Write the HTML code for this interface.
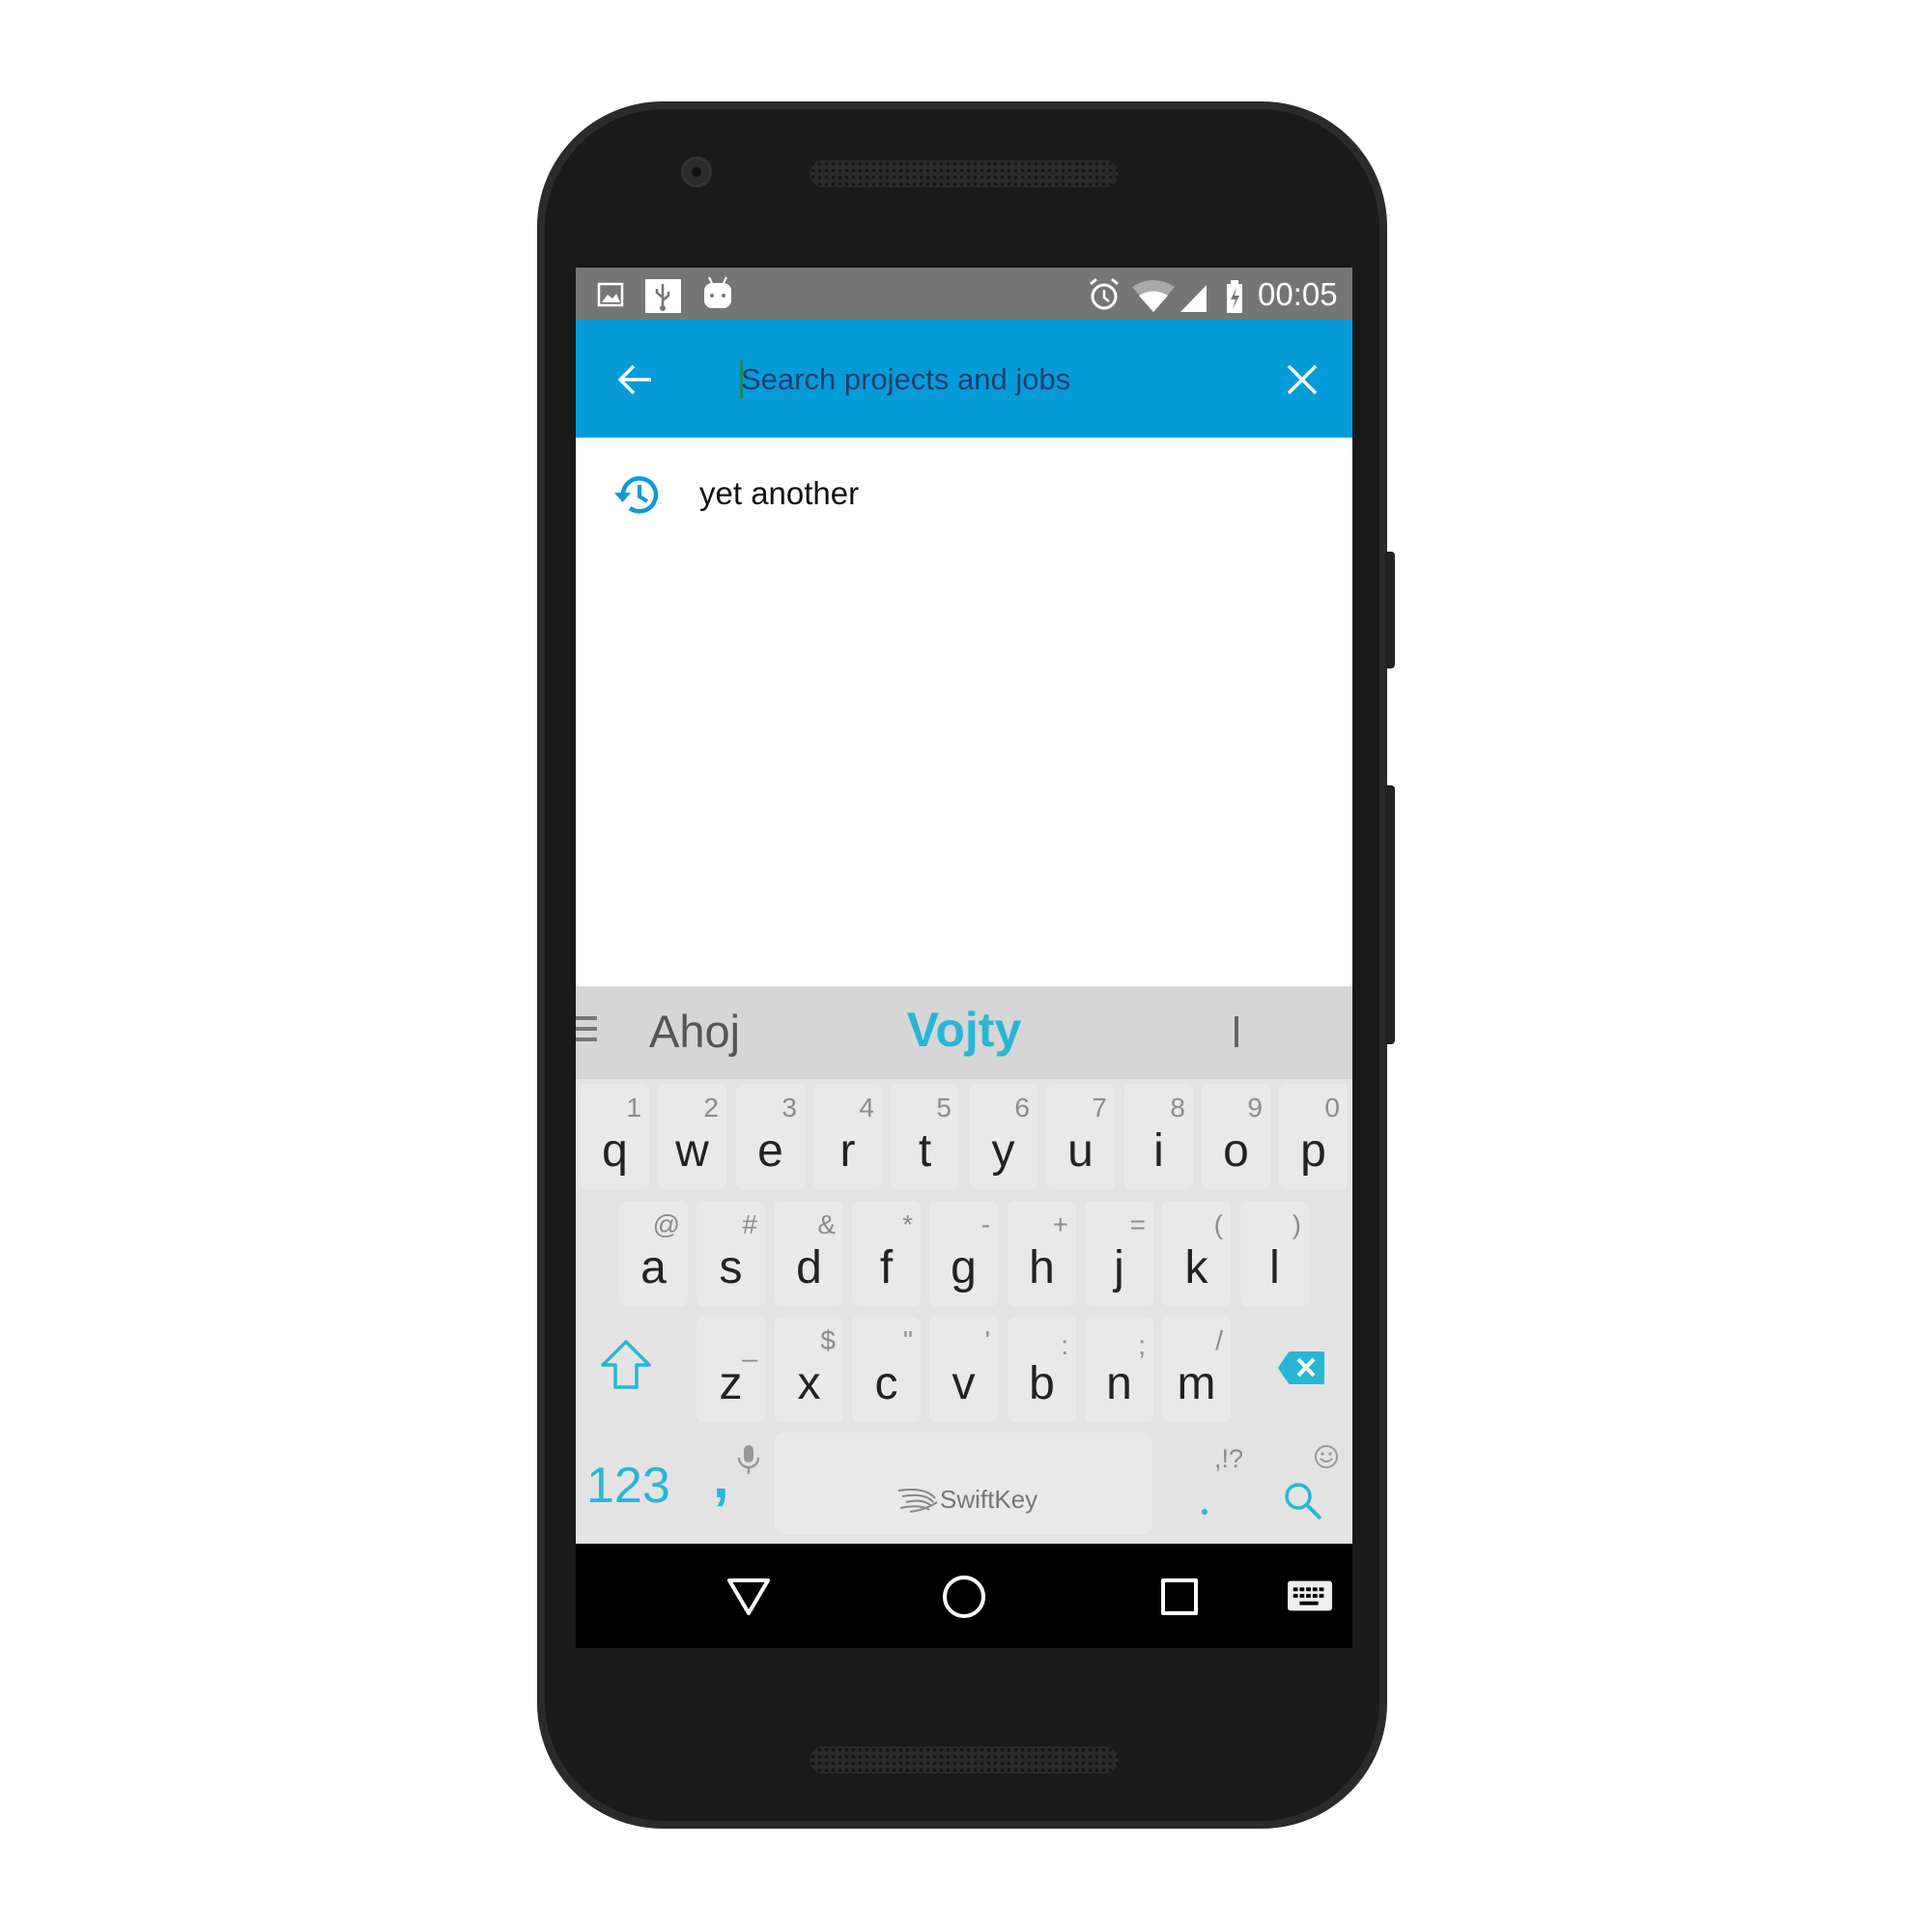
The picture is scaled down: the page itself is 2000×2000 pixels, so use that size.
<!DOCTYPE html><html><head><meta charset="utf-8"><style>
*{margin:0;padding:0;box-sizing:border-box}
body{width:2000px;height:2000px;background:#fff;position:relative;overflow:hidden;font-family:"Liberation Sans",sans-serif}
.a{position:absolute}
.key{position:absolute;width:71px;height:109px;background:#e9e9e9;border-radius:7px}
.key b{position:absolute;left:0;right:0;text-align:center;font-weight:normal;font-size:48px;top:46px;line-height:1;color:#222}
.key i{position:absolute;right:8px;top:11px;font-size:28px;font-style:normal;color:#8c8c8c;line-height:1}
</style></head><body>
<div class="a" style="left:556px;top:105px;width:880px;height:1788px;background:#2b2b2b;border-radius:130px"></div>
<div class="a" style="left:564px;top:113px;width:864px;height:1772px;background:#1a1a1a;border-radius:124px"></div>
<div class="a" style="left:1434px;top:571px;width:10px;height:121px;background:#222;border-radius:0 4px 4px 0"></div>
<div class="a" style="left:1434px;top:813px;width:10px;height:268px;background:#222;border-radius:0 4px 4px 0"></div>
<div class="a" style="left:705px;top:162px;width:32px;height:32px;border-radius:50%;background:#2c2c2c;border:3px solid #333"></div>
<div class="a" style="left:716px;top:173px;width:10px;height:10px;border-radius:50%;background:#111"></div>
<div class="a" style="left:838px;top:166px;width:320px;height:28px;border-radius:14px;background:#2a2a2a;background-image:radial-gradient(#151515 1.5px,transparent 2px);background-size:7px 7px"></div>
<div class="a" style="left:838px;top:1808px;width:320px;height:28px;border-radius:14px;background:#2a2a2a;background-image:radial-gradient(#151515 1.5px,transparent 2px);background-size:7px 7px"></div>
<div class="a" style="left:596px;top:277px;width:804px;height:1429px;background:#fff"></div>
<div class="a" style="left:596px;top:277px;width:804px;height:54px;background:#757575"></div>
<svg class="a" style="left:617px;top:284px" width="110" height="40" viewBox="0 0 110 40">
<rect x="3" y="10" width="24" height="22" fill="none" stroke="#fff" stroke-width="2.5"/><path d="M6 29 L12 21 L17 25 L21 20 L25 29Z" fill="#fff"/>
<rect x="51" y="5" width="37" height="37" fill="#fff"/><path d="M69 10 v26 M69 24 l-6-5 v-4 M69 27 l6-5 v-4" stroke="#757575" stroke-width="2.5" fill="none"/><circle cx="69" cy="35" r="3" fill="#757575"/>
</svg>
<svg class="a" style="left:725px;top:285px" width="36" height="36" viewBox="0 0 36 36"><path d="M9 2 l3 6 M27 2 l-3 6" stroke="#fff" stroke-width="2"/><rect x="4" y="8" width="28" height="26" rx="8" fill="#fff"/><circle cx="12" cy="21" r="2" fill="#757575"/><circle cx="24" cy="21" r="2" fill="#757575"/></svg>
<svg class="a" style="left:1122px;top:286px" width="170" height="40" viewBox="0 0 170 40">
<circle cx="21" cy="21" r="12" fill="none" stroke="#fff" stroke-width="3"/><path d="M21 14 v8 l5 4" stroke="#fff" stroke-width="2.5" fill="none"/><path d="M7 8 l6-5 M35 8 l-6-5" stroke="#fff" stroke-width="3"/>
<path d="M50 11 Q72 -3 94 11 L72 37Z" fill="#aaa"/><path d="M57 20 Q72 11 87 20 L72 37Z" fill="#fff"/>
<path d="M100 37 L127 9 V37Z" fill="#fff"/>
<rect x="148" y="8" width="16" height="30" fill="#fff"/><rect x="152" y="4" width="8" height="5" fill="#fff"/><path d="M158 12 l-6 12 h5 l-3 10 l7-14 h-5z" fill="#757575"/>
</svg>
<div class="a" style="left:1302px;top:288px;font-size:33px;color:#fff;line-height:1">00:05</div>
<div class="a" style="left:596px;top:331px;width:804px;height:122px;background:#059bd9"></div>
<svg class="a" style="left:636px;top:371px" width="44" height="44" viewBox="0 0 44 44"><path d="M38 22 H6 M20 8 L6 22 L20 36" stroke="#fff" stroke-width="3.5" fill="none"/></svg>
<div class="a" style="left:766px;top:373px;width:3px;height:40px;background:#1b8a5a"></div>
<div class="a" style="left:767px;top:374px;font-size:31px;color:#1c3f6e;line-height:1.2">Search projects and jobs</div>
<svg class="a" style="left:1330px;top:375px" width="36" height="36" viewBox="0 0 36 36"><path d="M4 4 L32 32 M32 4 L4 32" stroke="#fff" stroke-width="3.5"/></svg>
<svg class="a" style="left:633px;top:485px" width="54" height="54" viewBox="0 0 54 54"><path d="M12 27 A17 17 0 1 1 19 41" stroke="#0a9bd6" stroke-width="4.5" fill="none"/><path d="M3 25 h17 l-8.5 10z" fill="#0a9bd6"/><path d="M29 17 v12 l8 5" stroke="#0a9bd6" stroke-width="4" fill="none"/></svg>
<div class="a" style="left:724px;top:493px;font-size:33px;color:#111;line-height:1.1">yet another</div>
<div class="a" style="left:596px;top:1021px;width:804px;height:96px;background:#d6d6d6"></div>
<div class="a" style="left:596px;top:1052px;width:22px;height:4px;background:#777;box-shadow:0 11px 0 #777,0 22px 0 #777"></div>
<div class="a" style="left:672px;top:1042px;font-size:47px;color:#555;line-height:1.1">Ahoj</div>
<div class="a" style="left:898px;width:200px;text-align:center;top:1039px;font-size:50px;font-weight:bold;color:#29b6d4;line-height:1.1">Vojty</div>
<div class="a" style="left:1278px;top:1052px;width:4px;height:32px;background:#666"></div>
<div class="a" style="left:596px;top:1117px;width:804px;height:481px;background:#e3e3e3"></div>
<div class="key" style="left:601px;top:1122px"><i>1</i><b>q</b></div>
<div class="key" style="left:681px;top:1122px"><i>2</i><b>w</b></div>
<div class="key" style="left:762px;top:1122px"><i>3</i><b>e</b></div>
<div class="key" style="left:842px;top:1122px"><i>4</i><b>r</b></div>
<div class="key" style="left:922px;top:1122px"><i>5</i><b>t</b></div>
<div class="key" style="left:1003px;top:1122px"><i>6</i><b>y</b></div>
<div class="key" style="left:1083px;top:1122px"><i>7</i><b>u</b></div>
<div class="key" style="left:1164px;top:1122px"><i>8</i><b>i</b></div>
<div class="key" style="left:1244px;top:1122px"><i>9</i><b>o</b></div>
<div class="key" style="left:1324px;top:1122px"><i>0</i><b>p</b></div>
<div class="key" style="left:641px;top:1243px"><i>@</i><b>a</b></div>
<div class="key" style="left:721px;top:1243px"><i>#</i><b>s</b></div>
<div class="key" style="left:802px;top:1243px"><i>&amp;</i><b>d</b></div>
<div class="key" style="left:882px;top:1243px"><i>*</i><b>f</b></div>
<div class="key" style="left:962px;top:1243px"><i>-</i><b>g</b></div>
<div class="key" style="left:1043px;top:1243px"><i>+</i><b>h</b></div>
<div class="key" style="left:1123px;top:1243px"><i>=</i><b>j</b></div>
<div class="key" style="left:1203px;top:1243px"><i>(</i><b>k</b></div>
<div class="key" style="left:1284px;top:1243px"><i>)</i><b>l</b></div>
<svg class="a" style="left:620px;top:1385px" width="56" height="56" viewBox="0 0 56 56"><path d="M28 4 L52 28 H39 V51 H17 V28 H4Z" fill="none" stroke="#29b6d4" stroke-width="3.5" stroke-linejoin="round"/></svg>
<div class="key" style="left:721px;top:1363px"><i style="top:18px">_</i><b>z</b></div>
<div class="key" style="left:802px;top:1363px"><i>$</i><b>x</b></div>
<div class="key" style="left:882px;top:1363px"><i>"</i><b>c</b></div>
<div class="key" style="left:962px;top:1363px"><i>'</i><b>v</b></div>
<div class="key" style="left:1043px;top:1363px"><i style="top:16px">:</i><b>b</b></div>
<div class="key" style="left:1123px;top:1363px"><i style="top:16px">;</i><b>n</b></div>
<div class="key" style="left:1203px;top:1363px"><i>/</i><b>m</b></div>
<svg class="a" style="left:1323px;top:1398px" width="50" height="36" viewBox="0 0 50 36"><path d="M12 2 H47 V34 H12 L1 18Z" fill="#29b6d4" stroke="#29b6d4" stroke-linejoin="round" stroke-width="2"/><path d="M21 9 L37 26 M37 9 L21 26" stroke="#fff" stroke-width="4"/></svg>
<div class="a" style="left:607px;top:1512px;font-size:52px;color:#29b6d4;line-height:1">123</div>
<div class="a" style="left:738px;top:1500px;font-size:60px;font-weight:bold;color:#29b6d4;line-height:1">,</div>
<svg class="a" style="left:762px;top:1494px" width="26" height="34" viewBox="0 0 26 34"><rect x="8" y="2" width="10" height="18" rx="5" fill="#999"/><path d="M3 15 a10 10 0 0 0 20 0 M13 25 v7" stroke="#999" stroke-width="2.5" fill="none"/></svg>
<div class="a" style="left:802px;top:1483px;width:391px;height:106px;border-radius:10px;background:#e9e9e9"></div>
<svg class="a" style="left:928px;top:1539px" width="45" height="28" viewBox="0 0 45 28"><path d="M2 4 Q30 0 40 12 M6 10 Q30 6 38 16 M10 16 Q28 12 36 20 M4 22 Q26 18 34 24 M14 26 Q30 24 42 16" stroke="#888" stroke-width="2" fill="none"/></svg>
<div class="a" style="left:973px;top:1539px;font-size:26px;color:#777;line-height:1">SwiftKey</div>
<div class="a" style="left:1257px;top:1497px;font-size:27px;color:#8c8c8c;line-height:1">,!?</div>
<div class="a" style="left:1244px;top:1562px;width:6px;height:6px;border-radius:50%;background:#29b6d4"></div>
<svg class="a" style="left:1359px;top:1494px" width="28" height="28" viewBox="0 0 28 28"><circle cx="14" cy="14" r="11" fill="none" stroke="#999" stroke-width="2"/><circle cx="10" cy="11" r="1.6" fill="#999"/><circle cx="18" cy="11" r="1.6" fill="#999"/><path d="M8 16 q6 6 12 0" stroke="#999" stroke-width="2" fill="none"/></svg>
<svg class="a" style="left:1328px;top:1533px" width="42" height="42" viewBox="0 0 42 42"><circle cx="16" cy="16" r="12" fill="none" stroke="#29b6d4" stroke-width="3.5"/><path d="M25 25 L39 39" stroke="#29b6d4" stroke-width="4"/></svg>
<div class="a" style="left:596px;top:1598px;width:804px;height:108px;background:#000"></div>
<svg class="a" style="left:752px;top:1632px" width="46" height="42" viewBox="0 0 46 42"><path d="M3 4 H43 L23 38Z" fill="none" stroke="#fff" stroke-width="4" stroke-linejoin="round"/></svg>
<div class="a" style="left:976px;top:1631px;width:44px;height:44px;border-radius:50%;border:4px solid #fff"></div>
<div class="a" style="left:1202px;top:1634px;width:38px;height:38px;border:4px solid #fff;border-radius:2px"></div>
<svg class="a" style="left:1333px;top:1636px" width="46" height="32" viewBox="0 0 48 32"><rect x="0" y="0" width="48" height="32" rx="3" fill="#eee"/><g fill="#000"><rect x="6" y="7" width="5" height="4"/><rect x="13" y="7" width="5" height="4"/><rect x="20" y="7" width="5" height="4"/><rect x="27" y="7" width="5" height="4"/><rect x="34" y="7" width="5" height="4"/><rect x="6" y="14" width="5" height="4"/><rect x="13" y="14" width="5" height="4"/><rect x="20" y="14" width="5" height="4"/><rect x="27" y="14" width="5" height="4"/><rect x="34" y="14" width="5" height="4"/><rect x="13" y="22" width="20" height="4"/></g></svg>
</body></html>
